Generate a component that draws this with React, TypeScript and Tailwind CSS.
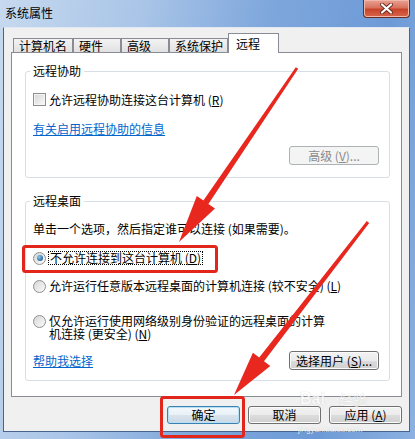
import type { ReactNode } from "react";

type BtnProps = {
  children: ReactNode;
  className?: string;
  variant?: "normal" | "default" | "disabled";
};

function Btn({ children, className = "", variant = "normal" }: BtnProps) {
  const look =
    variant === "disabled"
      ? "border-[#adb2b5] bg-[#f4f4f4] text-[#8a8a8a]"
      : variant === "default"
        ? "border-[#3c7fb1] bg-[linear-gradient(to_bottom,#f4f8fb_0%,#e9f1f7_50%,#d9e4ee_50%,#cbd8e3_100%)] shadow-[inset_0_0_0_1px_#b7e0f6] text-black"
        : "border-[#707070] bg-[linear-gradient(to_bottom,#f2f2f2_0%,#ebebeb_50%,#dddddd_50%,#cfcfcf_100%)] shadow-[inset_0_0_0_1px_#fbfbfb] text-black";
  return (
    <div
      className={`flex items-center justify-center border rounded-[3px] text-[12px] leading-[12px] ${look} ${className}`}
    >
      {children}
    </div>
  );
}

function Radio({ checked = false }: { checked?: boolean }) {
  return (
    <div className="flex items-center justify-center w-[13px] h-[13px] shrink-0 rounded-full border border-[#8e8f8f] bg-[linear-gradient(135deg,#d6d6d6,#fbfbfb)]">
      {checked && (
        <div className="w-[6px] h-[6px] rounded-full bg-[radial-gradient(circle_at_35%_35%,#8fc8f0,#2a6aa3_70%,#1a4a78)]" />
      )}
    </div>
  );
}

function Tab({ label, className }: { label: string; className: string }) {
  return (
    <div
      className={`h-[15px] flex items-center pl-[5px] border border-[#898c95] bg-[linear-gradient(to_bottom,#f3f3f3,#e1e1e1)] text-[12px] leading-[12px] ${className}`}
    >
      {label}
    </div>
  );
}

export default function App() {
  return (
    <div className="relative w-[415px] h-[439px] overflow-hidden bg-[linear-gradient(100deg,#c6d9ef_0%,#a8c4e7_30%,#7ea7dc_55%,#6d9ad7_80%,#8cb1e1_100%)] font-['Noto_Sans_CJK_SC',sans-serif] text-black">
      {/* title bar */}
      <div className="h-[27px] flex justify-between">
        <div className="pl-[5px] pt-[6px] text-[12px] leading-[13px]">系统属性</div>
        <div className="mr-[5px] w-[47px] h-[18px] flex items-center justify-center rounded-b-[4px] border border-t-0 border-[#6a2c22] bg-[linear-gradient(to_bottom,#e9a394_0%,#d9715e_45%,#c7432b_55%,#d7664a_100%)] shadow-[inset_0_0_0_1px_#f0b8aa]">
          <svg width="13" height="11" viewBox="0 0 13 11">
            <path
              d="M2 1.5 L11 9.5 M11 1.5 L2 9.5"
              stroke="#6b2a20"
              strokeWidth="4"
              strokeLinecap="round"
            />
            <path
              d="M2 1.5 L11 9.5 M11 1.5 L2 9.5"
              stroke="#ffffff"
              strokeWidth="2.2"
              strokeLinecap="round"
            />
          </svg>
        </div>
      </div>

      {/* client area */}
      <div className="ml-[3px] w-[407px] h-[405px] bg-[#f0f0f0] border-x border-b border-[#45648f] border-t border-t-[#dfe8f3]">
        {/* tabs */}
        <div className="relative z-10 mt-[5px] -mb-[1px] h-[20px] pl-[9px] flex items-end">
          <Tab label="计算机名" className="w-[60px]" />
          <Tab label="硬件" className="w-[48px]" />
          <Tab label="高级" className="w-[48px]" />
          <Tab label="系统保护" className="w-[59px] pl-[4px]" />
          <div className="h-[20px] w-[51px] pl-[7px] pt-[4px] border border-b-0 border-[#898c95] bg-white text-[12px] leading-[12px]">
            远程
          </div>
        </div>

        {/* tab panel */}
        <div className="ml-[7px] w-[391px] h-[345px] border border-[#898c95] bg-white flex flex-col">
          <fieldset className="mt-[12px] ml-[13px] w-[365px] border border-[#d5dfe5] rounded-[3px] pb-[12px] flex flex-col">
            <legend className="ml-[4px] px-[3px] text-[12px] leading-[12px]">远程协助</legend>
            <div className="mt-[16px] pl-[7px] h-[13px] flex items-center gap-[3px]">
              <div className="w-[13px] h-[13px] border border-[#8e8f8f] bg-[linear-gradient(135deg,#d4d4d4,#fbfbfb)] shadow-[inset_0_0_0_1px_#f4f4f4]" />
              <span className="text-[12px] leading-[12px]">
                允许远程协助连接这台计算机 (<span className="underline">R</span>)
              </span>
            </div>
            <div className="mt-[17px] pl-[7px] h-[12px] text-[12px] leading-[12px] text-[#0066cc] underline">
              有关启用远程协助的信息
            </div>
            <div className="mt-[11px] flex justify-end pr-[10px]">
              <Btn variant="disabled" className="w-[90px] h-[19px]">
                高级 (<span className="underline">V</span>)...
              </Btn>
            </div>
          </fieldset>

          <fieldset className="mt-[17px] ml-[13px] w-[365px] border border-[#d5dfe5] rounded-[3px] pb-[10px] flex flex-col">
            <legend className="ml-[4px] px-[3px] text-[12px] leading-[12px]">远程桌面</legend>
            <div className="mt-[16px] pl-[7px] h-[12px] text-[12px] leading-[12px]">
              单击一个选项，然后指定谁可以连接 (如果需要)。
            </div>
            <div className="mt-[16px] pl-[7px] h-[14px] flex items-center gap-[2px]">
              <Radio checked />
              <span className="border border-dotted border-black px-[1px] text-[12px] leading-[12px]">
                不允许连接到这台计算机 (<span className="underline">D</span>)
              </span>
            </div>
            <div className="mt-[14px] pl-[7px] h-[14px] flex items-center gap-[3px]">
              <Radio />
              <span className="text-[12px] leading-[12px]">
                允许运行任意版本远程桌面的计算机连接 (较不安全) (<span className="underline">L</span>)
              </span>
            </div>
            <div className="mt-[21px] pl-[7px] flex items-start gap-[3px]">
              <div className="pt-[1px]">
                <Radio />
              </div>
              <span className="text-[12px] leading-[13px]">
                仅允许运行使用网络级别身份验证的远程桌面的计算
                <br />
                机连接 (更安全) (<span className="underline">N</span>)
              </span>
            </div>
            <div className="mt-[11px] pl-[7px] pr-[10px] h-[19px] flex items-center justify-between">
              <span className="text-[12px] leading-[12px] text-[#0066cc] underline">帮助我选择</span>
              <Btn className="w-[90px] h-[19px]">
                选择用户 (<span className="underline">S</span>)...
              </Btn>
            </div>
          </fieldset>
        </div>

        {/* dialog buttons */}
        <div className="mt-[9px] pr-[7px] flex justify-end gap-[8px]">
          <Btn variant="default" className="w-[73px] h-[18px]">
            确定
          </Btn>
          <Btn className="w-[73px] h-[18px]">取消</Btn>
          <Btn className="w-[73px] h-[18px]">
            应用 (<span className="underline">A</span>)
          </Btn>
        </div>
      </div>

      {/* baidu watermark */}
      <div className="absolute left-[300px] top-[391px] pointer-events-none flex items-end opacity-70">
        <span className="font-['Liberation_Sans',sans-serif] font-bold text-[16px] leading-[16px] text-white [text-shadow:0_0_1px_#a8a8a8]">
          Bai
        </span>
        <span className="ml-[14px] text-[14px] leading-[16px] text-white [text-shadow:0_0_1px_#a8a8a8]">
          经验
        </span>
      </div>
      <div className="absolute left-[298px] top-[426px] pointer-events-none font-['Liberation_Sans',sans-serif] text-[8px] leading-[8px] text-white opacity-70 [text-shadow:0_0_1px_#b0b0b0]">
        jingyan.baidu.com
      </div>

      {/* red annotations */}
      <svg
        className="absolute inset-0 pointer-events-none"
        width="415"
        height="439"
        viewBox="0 0 415 439"
      >
        <rect x="23.5" y="246.5" width="193" height="25" rx="2" fill="none" stroke="#e3261b" strokeWidth="3" />
        <rect x="161.5" y="397.5" width="82" height="39" rx="2" fill="none" stroke="#e3261b" strokeWidth="3" />
        <polygon
          points="298.2,68.8 208.4,204.0 215.0,208.5 179,242 196.8,196.1 203.4,200.6 295.8,67.2"
          fill="#e8281e"
        />
        <polygon
          points="369.2,222.9 264.0,361.2 270.3,366.1 234,395 252.9,352.7 259.2,357.6 366.8,221.1"
          fill="#e8281e"
        />
      </svg>
    </div>
  );
}
